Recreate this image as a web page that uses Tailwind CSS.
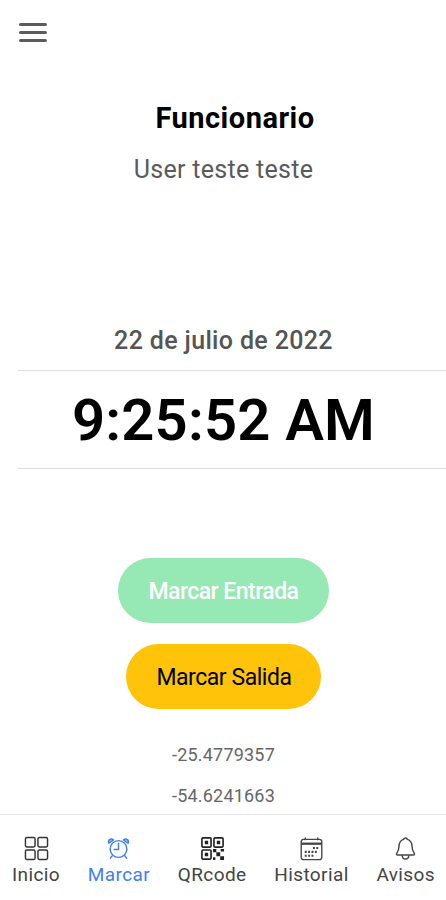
<!DOCTYPE html>
<html lang="es">
<head>
    <meta charset="UTF-8">
    <meta name="viewport" content="width=device-width, initial-scale=1.0">
    <title>Marcar</title>
    <script src="https://cdn.jsdelivr.net/npm/@tailwindcss/browser@4"></script>
</head>
<body class="bg-white font-[Roboto,sans-serif] text-black">
    <div class="flex h-[900px] w-[446px] flex-col overflow-hidden whitespace-nowrap">
        <header class="flex h-16 shrink-0 items-center pl-[19px]">
            <button aria-label="Menú" class="flex w-7 flex-col gap-[5px]">
                <span class="h-[3px] rounded-full bg-[#5c5c5c]"></span>
                <span class="h-[3px] rounded-full bg-[#5c5c5c]"></span>
                <span class="h-[3px] rounded-full bg-[#5c5c5c]"></span>
            </button>
        </header>

        <main class="flex min-h-0 grow flex-col items-center *:shrink-0">
            <h1 class="mt-8 pl-6 text-[29px] leading-[44px] font-bold tracking-[0.5px]">Funcionario</h1>
            <p class="mt-2 pl-px text-[25px] leading-[44px] tracking-[0.3px] text-[#5a5a5a]">User teste teste</p>

            <section class="mt-[127px] flex w-full flex-col pl-[18px] text-center">
                <h2 class="h-[52px] border-b border-[#dedede] pr-[17px] text-[25px] leading-[44px] font-medium tracking-[0.35px] text-[#555]">22 de julio de 2022</h2>
                <p class="h-[98px] border-b border-[#dedede] pr-[17px] text-[58px] leading-[98px] font-semibold tracking-[0.2px]">9:25:52 AM</p>
            </section>

            <button class="mt-[89px] h-[65px] w-[211px] rounded-full bg-[#96e8b4] pt-[3px] pl-px text-[23px] font-medium tracking-[-0.55px] text-white">Marcar Entrada</button>
            <button class="mt-[21px] h-[65px] w-[195px] rounded-full bg-[#ffc409] pt-[3px] pl-[2px] text-[23px] tracking-[-0.45px]">Marcar Salida</button>

            <p class="mt-[26px] pl-px text-[18px] leading-10 tracking-[0.2px] text-[#666]">-25.4779357</p>
            <p class="pl-px text-[18px] leading-[41px] tracking-[0.2px] text-[#666]">-54.6241663</p>
        </main>

        <nav class="flex h-[86px] shrink-0 justify-between border-t border-[#e8e8e8] pt-[21px] pr-[11px] pl-3 text-[19px] leading-[27px] tracking-[0.4px] text-[#444]">
            <a class="flex flex-col items-center">
                <svg class="size-[25px]" viewBox="0 0 26 26" fill="none" stroke="#333" stroke-width="1.5">
                    <rect x="1.5" y="1.5" width="10" height="10" rx="1.5"/>
                    <rect x="14.5" y="1.5" width="10" height="10" rx="1.5"/>
                    <rect x="1.5" y="14.5" width="10" height="10" rx="1.5"/>
                    <rect x="14.5" y="14.5" width="10" height="10" rx="1.5"/>
                </svg>
                <span>Inicio</span>
            </a>
            <a class="flex flex-col items-center text-[#4080ee]">
                <svg class="size-[25px]" viewBox="0 0 26 26" fill="none" stroke="currentColor" stroke-width="1.5" stroke-linecap="round" stroke-linejoin="round">
                    <circle cx="13" cy="13.5" r="8.7"/>
                    <path d="M13 7.5v6.5H8.5M6.5 20.5l-2 2.5M19.5 20.5l2 2.5"/>
                    <path fill="currentColor" fill-opacity=".4" d="M3 7.5C1.5 4 5 2 7.8 4L3 7.5ZM23 7.5C24.5 4 21 2 18.2 4L23 7.5Z"/>
                </svg>
                <span>Marcar</span>
            </a>
            <a class="flex flex-col items-center">
                <svg class="size-[25px]" viewBox="0 0 26 26" fill="none" stroke="#222" stroke-width="1.7">
                    <rect x="2" y="2" width="9.5" height="9.5" rx="1"/>
                    <rect x="14.5" y="2" width="9.5" height="9.5" rx="1"/>
                    <rect x="2" y="14.5" width="9.5" height="9.5" rx="1"/>
                    <path fill="#222" stroke="none" d="M5 5h3.5v3.5H5zM17.5 5H21v3.5h-3.5zM5 17.5h3.5V21H5zM13.5 13.5H17V17h-3.5zM17 17h4v4h-4zM21 21h4v4h-4zM21.5 13.5H25V16h-3.5zM13.500 22H16v3h-2.500z"/>
                </svg>
                <span>QRcode</span>
            </a>
            <a class="flex flex-col items-center">
                <svg class="size-[25px]" viewBox="0 0 26 26" fill="none" stroke="#444" stroke-width="1.4">
                    <rect x="2.3" y="3.5" width="21.4" height="21" rx="2.5"/>
                    <path stroke-width="2.4" d="M2.5 8h21"/>
                    <path d="M6.5 1.5v3M19.5 1.5v3"/>
                    <path stroke-width="2.2" stroke-dasharray="2 1.5" d="M14.500 12.500H20M6 16.500h14M6 20.500h9"/>
                </svg>
                <span>Historial</span>
            </a>
            <a class="flex flex-col items-center">
                <svg class="size-[25px]" viewBox="0 0 26 26" fill="none" stroke="#444" stroke-width="1.5" stroke-linejoin="round">
                    <path d="M13 2c-1.2 0-1.7.8-2 1.5C7.5 4.5 6.300 8 6.200 11c-.2 4-.7 5-2.200 6.800-.8 1-.2 2 .9 2h16.200c1.100 0 1.700-1 .9-2-1.500-1.800-2-2.800-2.200-6.800-.1-3-1.300-6.500-4.800-7.500-.3-.7-.8-1.500-2-1.500Z"/>
                    <path d="M9.5 20c.2 2.500 1.700 4 3.500 4s3.300-1.500 3.500-4"/>
                </svg>
                <span>Avisos</span>
            </a>
        </nav>
    </div>
</body>
</html>
